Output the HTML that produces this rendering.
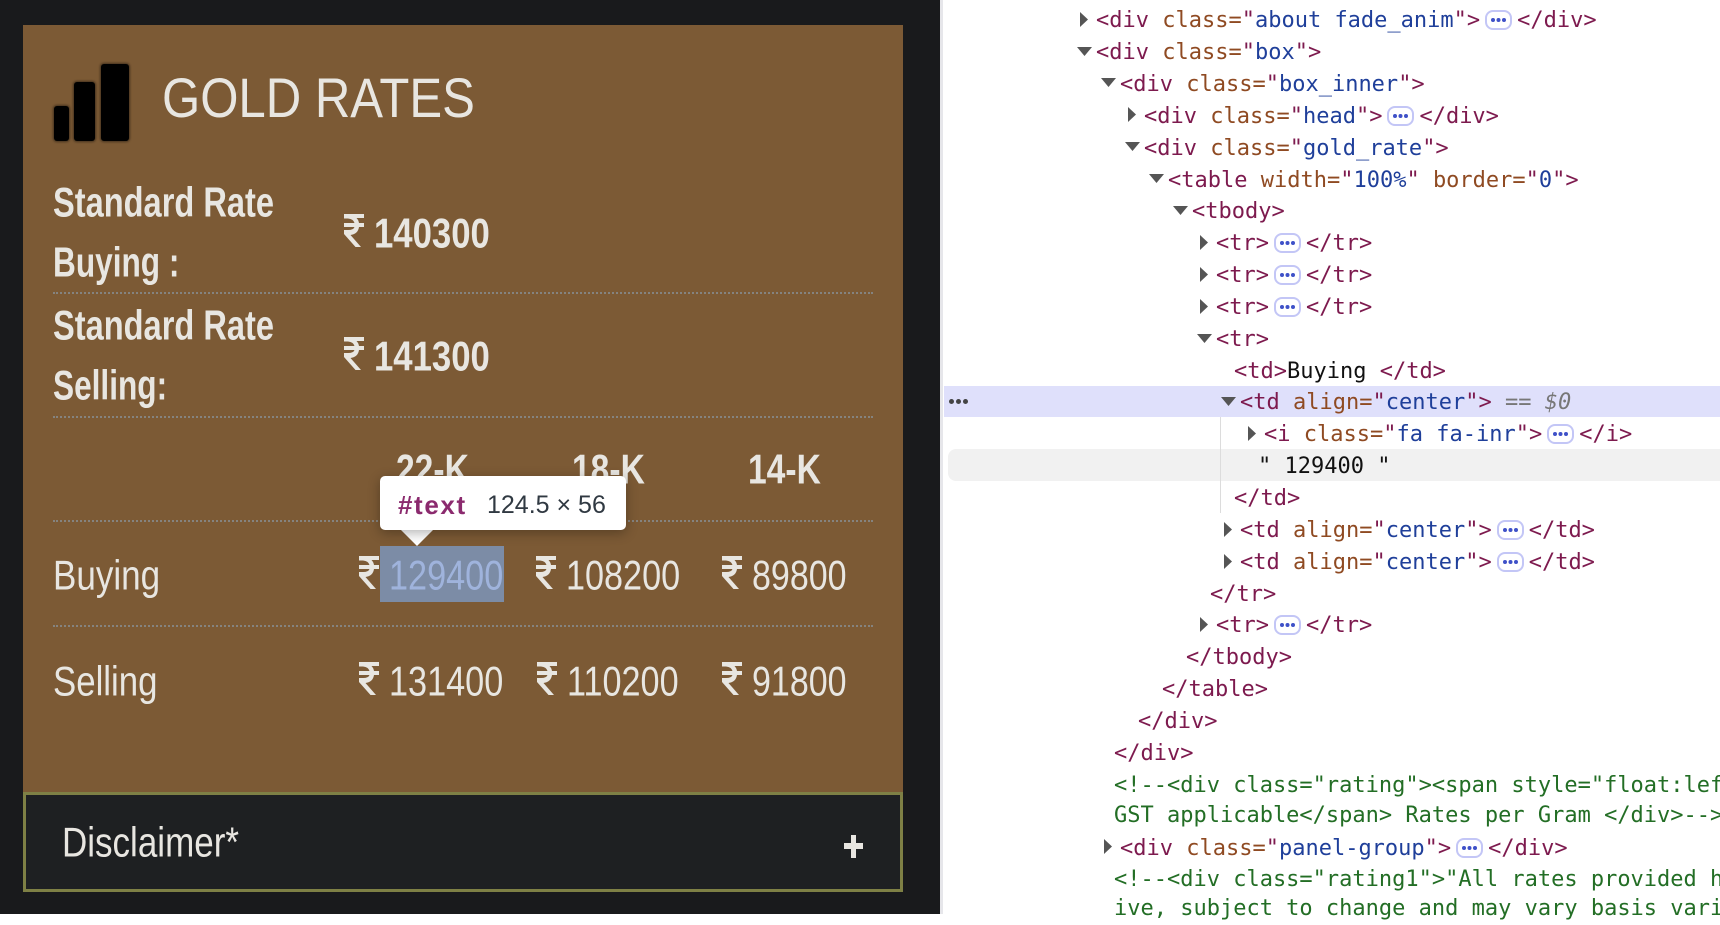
<!DOCTYPE html>
<html><head><meta charset="utf-8"><style>
html,body{margin:0;padding:0;width:1720px;height:914px;overflow:hidden;background:#fff}
#left{position:absolute;left:0;top:0;width:940px;height:914px;background:#191a1c;overflow:hidden}
#strip{position:absolute;left:940px;top:0;width:3px;height:914px;background:#e6e6ea}
#panel{position:absolute;left:23px;top:25px;width:880px;height:767px;background:#7c5a35}
.n{position:absolute;font-family:"Liberation Sans Narrow","Liberation Sans",sans-serif;color:#e8e6e1;white-space:nowrap;line-height:60px;font-size:40px;transform-origin:left center}
.b{font-weight:bold}
.dot{position:absolute;left:53px;width:820px;border-top:2px dotted #85837f;height:0}
.r{position:absolute;width:21px;height:33px;fill:#e8e6e1}
.bar{position:absolute;background:#000;border-radius:3px;box-shadow:0 0 2px 1px rgba(0,0,0,.45)}
#sel{position:absolute;left:380px;top:546px;width:124px;height:56px;background:#7c8ca6}
#tip{position:absolute;left:380px;top:476px;width:246px;height:54px;background:#fff;border-radius:5px;box-shadow:0 3px 12px rgba(0,0,0,.3);font-family:"Liberation Sans",sans-serif;font-size:25px;line-height:58px;white-space:nowrap}
#tip b{position:absolute;left:18px;top:0;color:#8b2a6e;font-size:26px;letter-spacing:1.6px}
#tip span{position:absolute;left:107px;top:0;color:#303942}
#arr{position:absolute;left:401px;top:530px;width:0;height:0;border-left:16px solid transparent;border-right:16px solid transparent;border-top:16px solid #fff}
#disc{position:absolute;left:23px;top:792px;width:874px;height:94px;background:#1e2022;border:3px solid #7e8045}
.pl{position:absolute;background:#e8e6e1}
.l{position:absolute;margin-top:2px;font-family:"DejaVu Sans Mono",monospace;font-size:22px;line-height:32px;color:#7d1a4e;white-space:pre}
.a{color:#8f4a22}.v{color:#1f3f9a}.k{color:#111}.c{color:#236e25}.g{color:#777}
.e{display:inline-block;box-sizing:border-box;width:27px;height:20px;margin:0 5px;border:2px solid #c3c6f6;border-radius:8px;vertical-align:-3px;position:relative}
.e:after{content:"";position:absolute;left:4px;top:6px;width:4px;height:4px;border-radius:50%;background:#3f51c8;box-shadow:5.5px 0 0 #3f51c8,11px 0 0 #3f51c8}
.tr{position:absolute;width:8px;height:15px;background:#555;clip-path:polygon(0 0,100% 50%,0 100%)}
.td{position:absolute;width:15px;height:9px;background:#555;clip-path:polygon(0 0,100% 0,50% 100%)}
</style></head><body>
<div id="left">
<div id="panel"></div>
<div class="bar" style="left:54px;top:106px;width:15px;height:35px"></div>
<div class="bar" style="left:74px;top:82px;width:21px;height:59px"></div>
<div class="bar" style="left:101px;top:64px;width:28px;height:77px"></div>
<div class="n" style="left:162px;top:63px;font-size:56px;line-height:70px;transform:scaleX(.877)">GOLD RATES</div>
<div class="n b" style="left:53px;top:173px;transform:scale(.815,1.05)">Standard Rate</div>
<div class="n b" style="left:53px;top:233px;transform:scale(.79,1.05)">Buying :</div>
<svg class="r" style="left:343px;top:214px" viewBox="0 0 21 33"><path d="M1 0H21V4H13.5Q15.5 6 16 9H21V13H16Q15 20 7.5 21L18 33H12.5L1 20V16H5Q10.5 16 11.5 13H1V9H11.5Q10.5 5 5 4.5H1Z"/></svg>
<div class="n b" style="left:374px;top:204px;transform:scale(.868,1.05)">140300</div>
<div class="dot" style="top:292px"></div>
<div class="n b" style="left:53px;top:296px;transform:scale(.815,1.05)">Standard Rate</div>
<div class="n b" style="left:53px;top:356px;transform:scale(.79,1.05)">Selling:</div>
<svg class="r" style="left:343px;top:337px" viewBox="0 0 21 33"><path d="M1 0H21V4H13.5Q15.5 6 16 9H21V13H16Q15 20 7.5 21L18 33H12.5L1 20V16H5Q10.5 16 11.5 13H1V9H11.5Q10.5 5 5 4.5H1Z"/></svg>
<div class="n b" style="left:374px;top:327px;transform:scale(.868,1.05)">141300</div>
<div class="dot" style="top:416px"></div>
<div class="n b" style="left:396px;top:440px;transform:scale(.84,1.05)">22-K</div>
<div class="n b" style="left:572px;top:440px;transform:scale(.84,1.05)">18-K</div>
<div class="n b" style="left:748px;top:440px;transform:scale(.84,1.05)">14-K</div>
<div class="dot" style="top:520px"></div>
<div id="sel"></div>
<div class="n" style="left:53px;top:546px;transform:scale(.876,1.05)">Buying</div>
<svg class="r" style="left:358px;top:556px" viewBox="0 0 21 33"><path d="M1 0H21V4H13.5Q15.5 6 16 9H21V13H16Q15 20 7.5 21L18 33H12.5L1 20V16H5Q10.5 16 11.5 13H1V9H11.5Q10.5 5 5 4.5H1Z"/></svg>
<div class="n" style="left:389px;top:546px;color:#9fb3dc;transform:scale(.856,1.05)">129400</div>
<svg class="r" style="left:535px;top:556px" viewBox="0 0 21 33"><path d="M1 0H21V4H13.5Q15.5 6 16 9H21V13H16Q15 20 7.5 21L18 33H12.5L1 20V16H5Q10.5 16 11.5 13H1V9H11.5Q10.5 5 5 4.5H1Z"/></svg>
<div class="n" style="left:566px;top:546px;transform:scale(.855,1.05)">108200</div>
<svg class="r" style="left:721px;top:556px" viewBox="0 0 21 33"><path d="M1 0H21V4H13.5Q15.5 6 16 9H21V13H16Q15 20 7.5 21L18 33H12.5L1 20V16H5Q10.5 16 11.5 13H1V9H11.5Q10.5 5 5 4.5H1Z"/></svg>
<div class="n" style="left:752px;top:546px;transform:scale(.85,1.05)">89800</div>
<div class="dot" style="top:625px"></div>
<div class="n" style="left:53px;top:652px;transform:scale(.87,1.05)">Selling</div>
<svg class="r" style="left:358px;top:662px" viewBox="0 0 21 33"><path d="M1 0H21V4H13.5Q15.5 6 16 9H21V13H16Q15 20 7.5 21L18 33H12.5L1 20V16H5Q10.5 16 11.5 13H1V9H11.5Q10.5 5 5 4.5H1Z"/></svg>
<div class="n" style="left:389px;top:652px;transform:scale(.856,1.05)">131400</div>
<svg class="r" style="left:536px;top:662px" viewBox="0 0 21 33"><path d="M1 0H21V4H13.5Q15.5 6 16 9H21V13H16Q15 20 7.5 21L18 33H12.5L1 20V16H5Q10.5 16 11.5 13H1V9H11.5Q10.5 5 5 4.5H1Z"/></svg>
<div class="n" style="left:567px;top:652px;transform:scale(.855,1.05)">110200</div>
<svg class="r" style="left:721px;top:662px" viewBox="0 0 21 33"><path d="M1 0H21V4H13.5Q15.5 6 16 9H21V13H16Q15 20 7.5 21L18 33H12.5L1 20V16H5Q10.5 16 11.5 13H1V9H11.5Q10.5 5 5 4.5H1Z"/></svg>
<div class="n" style="left:752px;top:652px;transform:scale(.85,1.05)">91800</div>
<div id="disc"></div>
<div class="n" style="left:62px;top:813px;transform:scale(.875,1.05)">Disclaimer*</div>
<div class="pl" style="left:844px;top:843px;width:19px;height:6px"></div>
<div class="pl" style="left:851px;top:835px;width:5px;height:23px"></div>
<div id="arr"></div>
<div id="tip"><b>#text</b><span>124.5 × 56</span></div>
</div>
<div id="strip"></div>
<div style="position:absolute;left:944px;top:386px;width:776px;height:31px;background:#dfe0fb"></div>
<div style="position:absolute;left:948px;top:449px;width:772px;height:32px;background:#f1f1f1;border-radius:8px 0 0 8px"></div>
<div style="position:absolute;left:1220px;top:417px;width:1px;height:96px;background:#dcdcdc"></div>
<div style="position:absolute;left:949px;top:399px;width:5px;height:5px;border-radius:50%;background:#444;box-shadow:7px 0 0 #444,14px 0 0 #444"></div>

<div class="tr" style="left:1080px;top:12px"></div>
<div class="l" style="left:1096px;top:3px">&lt;div <span class="a">class=</span>"<span class="v">about fade_anim</span>"&gt;<span class="e"></span>&lt;/div&gt;</div>
<div class="td" style="left:1077px;top:47px"></div>
<div class="l" style="left:1096px;top:35px">&lt;div <span class="a">class=</span>"<span class="v">box</span>"&gt;</div>
<div class="td" style="left:1101px;top:78px"></div>
<div class="l" style="left:1120px;top:67px">&lt;div <span class="a">class=</span>"<span class="v">box_inner</span>"&gt;</div>
<div class="tr" style="left:1128px;top:107px"></div>
<div class="l" style="left:1144px;top:99px">&lt;div <span class="a">class=</span>"<span class="v">head</span>"&gt;<span class="e"></span>&lt;/div&gt;</div>
<div class="td" style="left:1125px;top:142px"></div>
<div class="l" style="left:1144px;top:131px">&lt;div <span class="a">class=</span>"<span class="v">gold_rate</span>"&gt;</div>
<div class="td" style="left:1149px;top:174px"></div>
<div class="l" style="left:1168px;top:163px">&lt;table <span class="a">width=</span>"<span class="v">100%</span>" <span class="a">border=</span>"<span class="v">0</span>"&gt;</div>
<div class="td" style="left:1173px;top:206px"></div>
<div class="l" style="left:1192px;top:194px">&lt;tbody&gt;</div>
<div class="tr" style="left:1200px;top:235px"></div>
<div class="l" style="left:1216px;top:226px">&lt;tr&gt;<span class="e"></span>&lt;/tr&gt;</div>
<div class="tr" style="left:1200px;top:267px"></div>
<div class="l" style="left:1216px;top:258px">&lt;tr&gt;<span class="e"></span>&lt;/tr&gt;</div>
<div class="tr" style="left:1200px;top:299px"></div>
<div class="l" style="left:1216px;top:290px">&lt;tr&gt;<span class="e"></span>&lt;/tr&gt;</div>
<div class="td" style="left:1197px;top:334px"></div>
<div class="l" style="left:1216px;top:322px">&lt;tr&gt;</div>
<div class="l" style="left:1234px;top:354px">&lt;td&gt;<span class="k">Buying </span>&lt;/td&gt;</div>
<div class="td" style="left:1221px;top:397px"></div>
<div class="l" style="left:1240px;top:385px">&lt;td <span class="a">align=</span>"<span class="v">center</span>"&gt; <span class="g">== <i>$0</i></span></div>
<div class="tr" style="left:1248px;top:426px"></div>
<div class="l" style="left:1264px;top:417px">&lt;i <span class="a">class=</span>"<span class="v">fa fa-inr</span>"&gt;<span class="e"></span>&lt;/i&gt;</div>
<div class="l k" style="left:1258px;top:449px;color:#111">" 129400 "</div>
<div class="l" style="left:1234px;top:481px">&lt;/td&gt;</div>
<div class="tr" style="left:1224px;top:522px"></div>
<div class="l" style="left:1240px;top:513px">&lt;td <span class="a">align=</span>"<span class="v">center</span>"&gt;<span class="e"></span>&lt;/td&gt;</div>
<div class="tr" style="left:1224px;top:554px"></div>
<div class="l" style="left:1240px;top:545px">&lt;td <span class="a">align=</span>"<span class="v">center</span>"&gt;<span class="e"></span>&lt;/td&gt;</div>
<div class="l" style="left:1210px;top:577px">&lt;/tr&gt;</div>
<div class="tr" style="left:1200px;top:617px"></div>
<div class="l" style="left:1216px;top:608px">&lt;tr&gt;<span class="e"></span>&lt;/tr&gt;</div>
<div class="l" style="left:1186px;top:640px">&lt;/tbody&gt;</div>
<div class="l" style="left:1162px;top:672px">&lt;/table&gt;</div>
<div class="l" style="left:1138px;top:704px">&lt;/div&gt;</div>
<div class="l" style="left:1114px;top:736px">&lt;/div&gt;</div>
<div class="l c" style="left:1114px;top:768px;color:#236e25">&lt;!--&lt;div class="rating"&gt;&lt;span style="float:left;</div>
<div class="l c" style="left:1114px;top:798px;color:#236e25">GST applicable&lt;/span&gt; Rates per Gram &lt;/div&gt;--&gt;</div>
<div class="tr" style="left:1104px;top:839px"></div>
<div class="l" style="left:1120px;top:831px">&lt;div <span class="a">class=</span>"<span class="v">panel-group</span>"&gt;<span class="e"></span>&lt;/div&gt;</div>
<div class="l c" style="left:1114px;top:862px;color:#236e25">&lt;!--&lt;div class="rating1"&gt;"All rates provided here</div>
<div class="l c" style="left:1114px;top:891px;color:#236e25">ive, subject to change and may vary basis vari</div>
</body></html>
